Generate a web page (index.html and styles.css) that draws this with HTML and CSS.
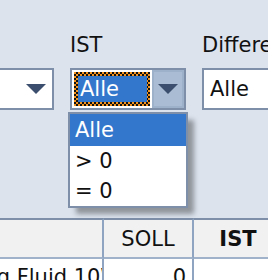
FILE: index.html
```html
<!DOCTYPE html>
<html lang="de">
<head>
    <meta charset="UTF-8">
    <meta name="viewport" content="width=device-width, initial-scale=1.0">
    <title>Bestand - Filter</title>
    <link rel="stylesheet" href="styles.css">
</head>
<body>
    <div class="page">
        <div class="filters">
            <div class="field field-artikel">
                <label class="field-label">Artikel</label>
                <div class="combo">
                    <span class="combo-text"></span>
                    <span class="combo-btn">
                        <svg width="20" height="10" viewBox="0 0 20 10"><polygon points="0,0 20,0 10,10"/></svg>
                    </span>
                </div>
            </div>

            <div class="field field-ist">
                <label class="field-label">IST</label>
                <div class="combo">
                    <div class="combo-value">
                        <div class="focus-ring">
                            <span class="combo-sel">Alle</span>
                        </div>
                    </div>
                    <span class="combo-btn hot">
                        <svg width="20" height="10" viewBox="0 0 20 10"><polygon points="0,0 20,0 10,10"/></svg>
                    </span>
                </div>

                <!-- aufgeklappte Liste -->
                <ul class="dropdown">
                    <li class="selected">Alle</li>
                    <li>&gt; 0</li>
                    <li>= 0</li>
                </ul>
            </div>

            <div class="field field-diff">
                <label class="field-label">Differenz</label>
                <div class="combo">
                    <span class="combo-text">Alle</span>
                    <span class="combo-btn">
                        <svg width="20" height="10" viewBox="0 0 20 10"><polygon points="0,0 20,0 10,10"/></svg>
                    </span>
                </div>
            </div>
        </div>

        <table class="grid">
            <colgroup>
                <col class="col-name">
                <col class="col-soll">
                <col class="col-ist">
            </colgroup>
            <thead>
                <tr>
                    <th></th>
                    <th>SOLL</th>
                    <th class="strong">IST</th>
                </tr>
            </thead>
            <tbody>
                <tr>
                    <td class="name">Schmierung Fluid 10W-40</td>
                    <td class="num">0</td>
                    <td class="num"></td>
                </tr>
            </tbody>
        </table>
    </div>
</body>
</html>
```

FILE: styles.css
```css
* {
    margin: 0;
    padding: 0;
    box-sizing: border-box;
}

body {
    font-family: 'DejaVu Sans', Tahoma, sans-serif;
    font-size: 21px;
    color: #111;
    background: #dce3ed;
    overflow: hidden;
}

.page {
    margin-left: -120px;
    width: 480px;
}

.filters {
    display: flex;
    gap: 16px;
    padding-top: 33px;
}

.field {
    position: relative;
    flex-shrink: 0;
}

.field-label {
    display: block;
    height: 24px;
    line-height: 24px;
    margin-bottom: 11px;
    white-space: nowrap;
}

.field-artikel {
    width: 174px;
}

.field-artikel .field-label {
    visibility: hidden;
}

.field-ist {
    width: 116px;
}

.field-diff {
    width: 140px;
}

.combo {
    display: flex;
    height: 42px;
    border: 2px solid #7d8fa9;
    background: white;
}

.combo-text {
    flex: 1;
    line-height: 38px;
    padding-left: 6px;
}

.combo-btn {
    width: 32px;
    display: flex;
    align-items: center;
    justify-content: center;
    fill: #3b4e6d;
}

.combo-btn.hot {
    background: #aabcd3;
    box-shadow: inset 0 0 0 2px #9db1ca;
}

.combo-value {
    flex: 1;
    padding: 2px;
}

.focus-ring {
    height: 100%;
    padding: 4px 3px 4px 4px;
    background: repeating-conic-gradient(#111 0 25%, #f5931f 0 50%) 0 0 / 4px 4px;
}

.combo-sel {
    display: block;
    height: 100%;
    line-height: 26px;
    padding-left: 2px;
    background: #3377cc;
    color: white;
}

.dropdown {
    position: absolute;
    top: 79px;
    left: -2px;
    width: 120px;
    list-style: none;
    background: white;
    border: 2px solid #7d8fa9;
    box-shadow: 7px 7px 5px -1px rgba(0, 0, 0, 0.35);
    z-index: 2;
}

.dropdown li {
    height: 30px;
    line-height: 30px;
    padding-left: 5px;
}

.dropdown li.selected {
    height: 32px;
    line-height: 32px;
    background: #3377cc;
    color: white;
}

.grid {
    margin-top: 108px;
    table-layout: fixed;
    border-collapse: separate;
    border-spacing: 0;
    width: 404px;
}

.col-name {
    width: 224px;
}

.col-soll {
    width: 90px;
}

.col-ist {
    width: 90px;
}

.grid th,
.grid td {
    border-right: 2px solid #8ea4c1;
    white-space: nowrap;
    overflow: hidden;
}

.grid th {
    height: 41px;
    background: #f1f1f1;
    border-top: 2px solid #7d8fa9;
    border-bottom: 2px solid #9fb2c9;
    font-weight: normal;
    text-align: center;
}

.grid th.strong {
    font-weight: bold;
}

.grid td {
    height: 30px;
    padding: 6px 4px 0;
    background: white;
    vertical-align: top;
}

.grid td.num {
    text-align: right;
    padding-right: 6px;
}
```
